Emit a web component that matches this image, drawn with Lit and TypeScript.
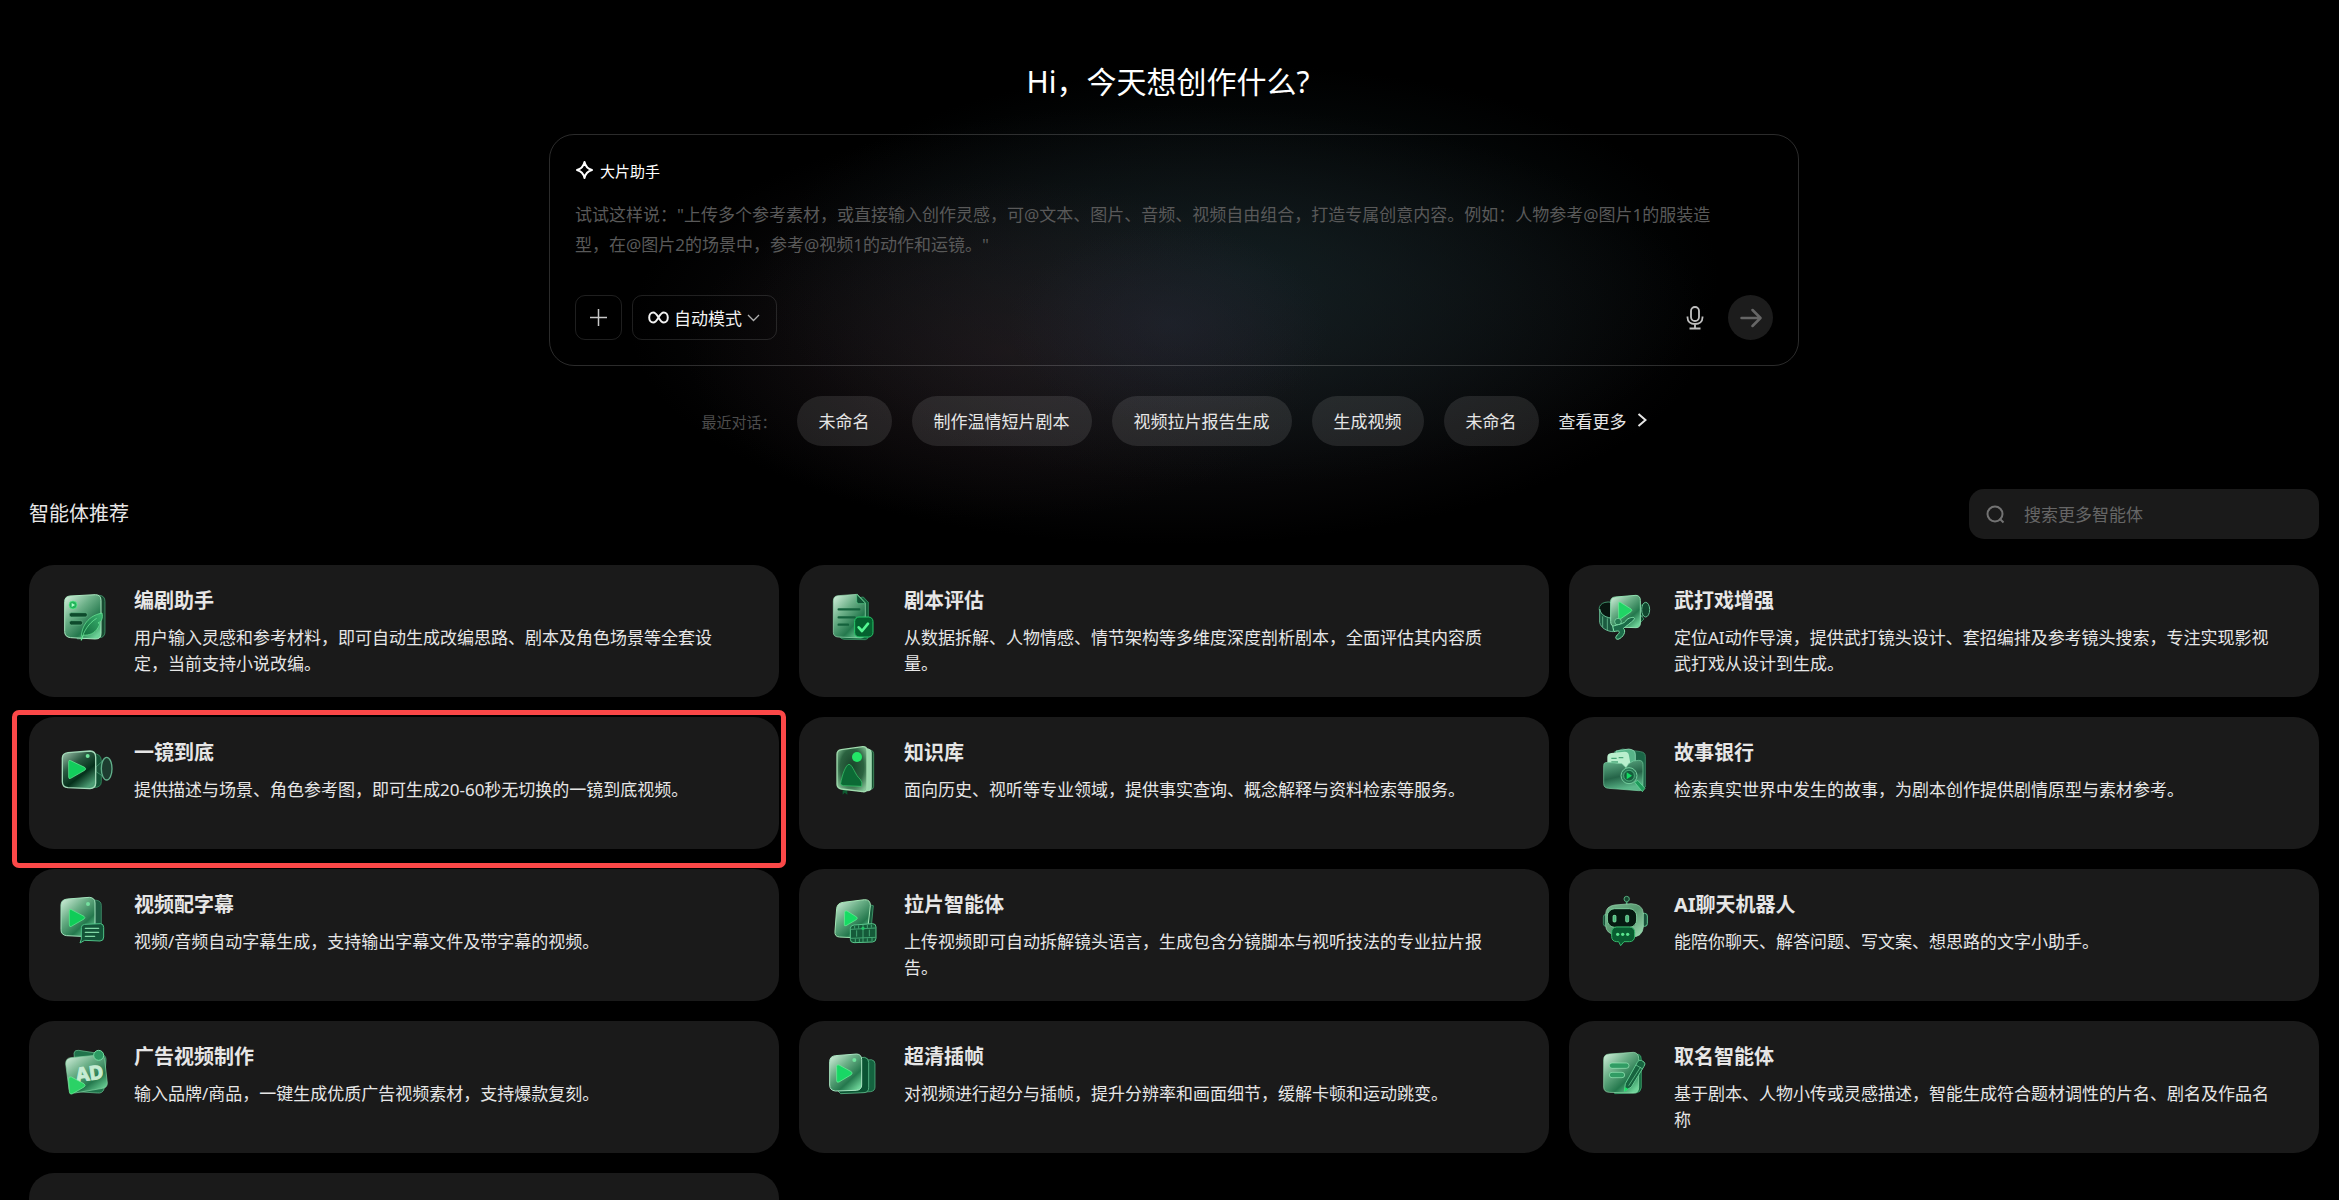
import { LitElement, html, svg, css, nothing } from "lit";
import type { SVGTemplateResult } from "lit";
import { customElement, property } from "lit/decorators.js";

interface Agent {
  icon: string;
  name: string;
  text: string;
  marked?: boolean;
}

const AGENTS: Agent[] = [
  { icon: "script", name: "编剧助手", text: "用户输入灵感和参考材料，即可自动生成改编思路、剧本及角色场景等全套设定，当前支持小说改编。" },
  { icon: "review", name: "剧本评估", text: "从数据拆解、人物情感、情节架构等多维度深度剖析剧本，全面评估其内容质量。" },
  { icon: "action", name: "武打戏增强", text: "定位AI动作导演，提供武打镜头设计、套招编排及参考镜头搜索，专注实现影视武打戏从设计到生成。" },
  { icon: "camera", name: "一镜到底", text: "提供描述与场景、角色参考图，即可生成20-60秒无切换的一镜到底视频。", marked: true },
  { icon: "book", name: "知识库", text: "面向历史、视听等专业领域，提供事实查询、概念解释与资料检索等服务。" },
  { icon: "folder", name: "故事银行", text: "检索真实世界中发生的故事，为剧本创作提供剧情原型与素材参考。" },
  { icon: "subtitle", name: "视频配字幕", text: "视频/音频自动字幕生成，支持输出字幕文件及带字幕的视频。" },
  { icon: "breakdown", name: "拉片智能体", text: "上传视频即可自动拆解镜头语言，生成包含分镜脚本与视听技法的专业拉片报告。" },
  { icon: "robot", name: "AI聊天机器人", text: "能陪你聊天、解答问题、写文案、想思路的文字小助手。" },
  { icon: "ad", name: "广告视频制作", text: "输入品牌/商品，一键生成优质广告视频素材，支持爆款复刻。" },
  { icon: "frames", name: "超清插帧", text: "对视频进行超分与插帧，提升分辨率和画面细节，缓解卡顿和运动跳变。" },
  { icon: "naming", name: "取名智能体", text: "基于剧本、人物小传或灵感描述，智能生成符合题材调性的片名、剧名及作品名称" },
];

const RECENT = ["未命名", "制作温情短片剧本", "视频拉片报告生成", "生成视频", "未命名"];

const GLYPHS: Record<string, SVGTemplateResult> = {
  script: svg`
    <path d="M60 32 L136 25 Q153 26 153 44 V134 Q153 150 138 152 L70 156Z" fill="#174a31" stroke="#4fae7c" stroke-width="2"/>
    <path d="M48 27 L124 23 Q141 23 141 40 V140 Q141 156 124 156 L50 152 Q32 150 32 134 V44 Q32 28 48 27Z" fill="url(#glass)" stroke="#a9e8bf" stroke-width="3"/>
    <circle cx="57" cy="54" r="12" fill="#23b45b" stroke="#5df08c" stroke-width="2"/>
    <path d="M53 48 L63 54 L53 60Z" fill="#b5ffcc"/>
    <rect x="46" y="77" width="54" height="13" rx="6" fill="#0e4a2c" stroke="#62b585" stroke-width="2"/>
    <rect x="46" y="101" width="40" height="13" rx="6" fill="#0e4a2c" stroke="#62b585" stroke-width="2"/>
    <path d="M82 160 C80 128 94 88 144 78 C148 94 142 104 132 108 C138 108 138 112 132 122 C122 140 104 146 88 144Z" fill="url(#deep)" stroke="#6ff09c" stroke-width="2"/>
    <path d="M82 160 C88 134 104 108 128 94" fill="none" stroke="#7af7a6" stroke-width="2"/>`,
  review: svg`
    <path d="M46 40 L118 30 L133 46 V150 Q133 156 124 158 L60 157 Q46 154 46 144Z" fill="#14603b" stroke="#3fa871" stroke-width="2"/>
    <path d="M42 26 L100 22 L124 48 V138 Q124 152 110 153 L42 150 Q28 149 28 136 V42 Q28 27 42 26Z" fill="url(#glass)" stroke="#9fe5ba" stroke-width="2"/>
    <path d="M98 22 L125 50 H104 Q98 50 98 43Z" fill="#0f5434" stroke="#5ccf8c" stroke-width="2"/>
    <path d="M44 67 H106 M44 91 H92 M44 113 H72" stroke="#14623c" stroke-width="7" stroke-linecap="round"/>
    <rect x="92" y="90" width="55" height="60" rx="13" fill="#04622f" stroke="#28c76a" stroke-width="3"/>
    <path d="M104 121 L114 132 L132 110" fill="none" stroke="#55f793" stroke-width="8" stroke-linecap="round" stroke-linejoin="round"/>`,
  action: svg`
    <path d="M134 60 L146 52 V90 L134 82Z M140 84 V106 L150 96Z" fill="#0d4229" stroke="#4aa878" stroke-width="2"/>
    <ellipse cx="155" cy="68" rx="12" ry="22" fill="#10472e" stroke="#67bf92" stroke-width="3"/>
    <path d="M54 46 C20 40 8 62 20 78 C28 88 44 94 60 94" fill="#07150f" stroke="#3d8f68" stroke-width="3"/>
    <path d="M17 66 V106 C20 124 42 134 58 134 V94 C38 94 20 84 17 66Z" fill="#1b5a40" stroke="#65b58f" stroke-width="3"/>
    <path d="M26 88 V120 M40 94 V130" stroke="#7cd3a5" stroke-width="2"/>
    <path d="M64 30 L126 25 Q139 26 139 40 V108 Q139 122 126 122 L64 120 Q50 118 50 104 V44 Q50 31 64 30Z" fill="url(#glass)" stroke="#8fe0b0" stroke-width="3"/>
    <path d="M74 48 Q74 44 79 46 L111 66 Q116 70 111 74 L79 96 Q74 98 74 94Z" fill="#20d465" stroke="#6cf79c" stroke-width="2"/>
    <circle cx="72" cy="104" r="10" fill="#267a52" stroke="#8fecb5" stroke-width="2"/>
    <path d="M56 118 C70 112 92 112 98 98 C112 88 126 90 120 98 C110 108 96 118 88 124 C98 132 88 152 72 157 C60 156 66 146 74 140 C80 132 72 130 60 134Z" fill="#1c6c49" stroke="#80e2aa" stroke-width="3" stroke-linejoin="round"/>`,
  camera: svg`
    <path d="M118 44 Q142 44 142 66 V128 Q142 146 118 146Z" fill="#125235" stroke="#3f9e6e" stroke-width="2"/>
    <path d="M126 84 L150 62 V114 L126 98Z" fill="#19553a" stroke="#4ea67b" stroke-width="2"/>
    <ellipse cx="158" cy="89" rx="16" ry="34" fill="#1d3d30" stroke="#62b08b" stroke-width="4"/>
    <path d="M42 41 L108 36 Q125 37 125 54 V132 Q125 148 108 149 L42 146 Q25 144 25 128 V58 Q25 43 42 41Z" fill="url(#shade)" stroke="#a2d9b8" stroke-width="4"/>
    <path d="M44 68 Q44 62 50 65 L92 85 Q98 90 92 94 L50 118 Q44 121 44 114Z" fill="#12cd5c" stroke="#6df49b" stroke-width="2"/>
    <circle cx="101" cy="51" r="6" fill="#6ee49b"/>`,
  book: svg`
    <path d="M56 154 V167 L62 161 L70 167 V152Z" fill="#0e5a30"/>
    <path d="M120 28 L142 34 Q149 36 149 44 V142 Q149 150 140 152 L118 154Z" fill="#144f2e" stroke="#51a873" stroke-width="2"/>
    <path d="M112 26 L134 30 Q142 32 142 40 V146 Q142 154 134 155 L112 158Z" fill="#9bd8ad" stroke="#c0f2cd" stroke-width="2"/>
    <path d="M52 32 L116 23 Q129 22 129 36 V146 Q129 160 116 158 L52 150 Q39 148 39 136 V46 Q39 34 52 32Z" fill="url(#cover)" stroke="#a0dcae" stroke-width="4"/>
    <circle cx="99" cy="54" r="15" fill="#23e667"/>
    <path d="M50 134 C54 108 66 76 75 76 C86 76 94 110 108 120 Q116 128 113 142 L58 140 Q50 139 50 134Z" fill="#0c6a35" stroke="#3bd070" stroke-width="2"/>`,
  folder: svg`
    <path d="M62 38 L86 30 L140 38 Q154 40 154 52 V144 L134 150 L62 120Z" fill="#1b6546" stroke="#4ba57c" stroke-width="2"/>
    <path d="M66 36 L104 30 Q124 32 124 46 V96 H66Z" fill="#57b488" stroke="#a5ecc7" stroke-width="2"/>
    <path d="M52 42 L92 38 Q104 38 105 50 L112 90 L98 98 H40 V54 Q40 44 52 42Z" fill="#b9efcd"/>
    <path d="M52 58 H68 M74 56 H88 M52 69 H72" stroke="#49a678" stroke-width="4"/>
    <path d="M40 70 L84 74 L96 86 L104 74 L118 66 L134 64 Q147 64 147 76 V144 Q147 156 134 155 L44 148 Q29 147 29 134 V80 Q29 69 40 70Z" fill="url(#pocket)" stroke="#79d0a2" stroke-width="2"/>
    <path d="M122 130 L131 124 L153 148 L145 158Z" fill="#1f9a5b" stroke="#6fe2a2" stroke-width="2"/>
    <circle cx="105" cy="110" r="24" fill="#2d7a57" stroke="#74cf9e" stroke-width="3"/>
    <circle cx="105" cy="110" r="16" fill="#145e3c" stroke="#63c592" stroke-width="2"/>
    <path d="M98 100 L114 110 L98 121Z" fill="#12db61"/>`,
  subtitle: svg`
    <path d="M112 26 L128 28 Q142 30 142 44 V124 L112 138Z" fill="#1c5d42" stroke="#4ba37a" stroke-width="2"/>
    <path d="M40 24 L106 19 Q123 20 123 36 V138 L38 134 Q21 132 21 116 V42 Q21 26 40 24Z" fill="url(#glass)" stroke="#a3e4bd" stroke-width="3"/>
    <path d="M46 60 Q46 53 52 56 L90 76 Q95 80 90 84 L52 106 Q46 109 46 102Z" fill="#10cc58" stroke="#64f094" stroke-width="2"/>
    <circle cx="102" cy="39" r="6" fill="#74df9f"/>
    <path d="M92 100 L140 98 Q149 99 149 109 V138 Q149 150 138 150 L92 148 L78 156 L82 144 V110 Q82 101 92 100Z" fill="#135438" stroke="#4ec287" stroke-width="3"/>
    <path d="M94 112 H134 M94 124 H134 M94 136 H122" stroke="#80d8a5" stroke-width="4" stroke-linecap="round"/>`,
  breakdown: svg`
    <path d="M130 34 L140 42 L148 44 L140 128 L122 136Z" fill="#175a3b" stroke="#4fb582" stroke-width="2"/>
    <path d="M58 34 L122 26 Q140 26 139 44 L130 124 Q128 141 112 141 L46 138 Q31 137 33 120 L38 52 Q40 36 58 34Z" fill="url(#glass)" stroke="#a3e6b5" stroke-width="3"/>
    <path d="M62 64 Q63 57 69 60 L98 78 Q102 82 97 86 L66 104 Q60 106 61 100Z" fill="#17db64" stroke="#66f596" stroke-width="2"/>
    <path d="M90 102 L146 98 Q156 98 156 108 V142 Q156 152 146 153 L90 155 Q79 155 79 145 V112 Q79 103 90 102Z" fill="#155a39" stroke="#58c68b" stroke-width="3"/>
    <path d="M80 115 L155 111 M80 142 L155 139 M117 102 V153 M98 118 V137 M136 116 V136 M92 105 V113 M142 101 V110 M104 103 V113 M130 102 V111 M94 143 V153 M106 143 V153 M130 142 V152 M144 141 V151" stroke="#43a673" stroke-width="3"/>
    <circle cx="117" cy="112" r="5" fill="#22c667"/>`,
  robot: svg`
    <path d="M98 32 V46" stroke="#4aa878" stroke-width="5"/>
    <circle cx="98" cy="24" r="8" fill="#17442f" stroke="#55ad7e" stroke-width="3"/>
    <rect x="28" y="70" width="16" height="36" rx="8" fill="#175139" stroke="#4da479" stroke-width="2"/>
    <rect x="143" y="67" width="17" height="39" rx="8" fill="#175139" stroke="#64c694" stroke-width="3"/>
    <path d="M62 42 L112 38 Q146 40 148 66 V108 Q146 138 112 138 L66 132 Q36 128 35 104 V68 Q36 46 62 42Z" fill="url(#skull)" stroke="#9be0b4" stroke-width="2"/>
    <rect x="40" y="53" width="88" height="56" rx="22" fill="#061a11" stroke="#7ecf9d" stroke-width="3"/>
    <rect x="57" y="73" width="9" height="20" rx="3" fill="#49b77a" stroke="#96f1b9" stroke-width="2"/>
    <rect x="95" y="73" width="9" height="20" rx="3" fill="#49b77a" stroke="#96f1b9" stroke-width="2"/>
    <path d="M68 108 H106 Q122 109 122 124 V136 Q121 152 106 152 H90 L80 164 L74 152 H68 Q53 151 53 136 V124 Q53 109 68 108Z" fill="#085c30" stroke="#36b76c" stroke-width="3"/>
    <circle cx="71" cy="130" r="5" fill="#59e38d"/><circle cx="86" cy="130" r="5" fill="#59e38d"/><circle cx="101" cy="130" r="5" fill="#59e38d"/>`,
  ad: svg`
    <path d="M60 30 Q62 20 74 22 L140 32 Q156 36 156 50 L150 138 Q146 152 130 150 L68 146Z" fill="#20734b" stroke="#6fc897" stroke-width="2"/>
    <path d="M50 44 L136 36 Q150 36 152 50 L160 120 Q160 134 146 136 L62 150 Q47 150 45 138 L35 62 Q35 46 50 44Z" fill="url(#glass)" stroke="#84d4a3" stroke-width="2"/>
    <text x="107" y="112" transform="rotate(-8 105 96)" text-anchor="middle" class="badge-text" fill="#c6ecd3">AD</text>
    <circle cx="134" cy="37" r="15" fill="#2c9a62" stroke="#74dca1" stroke-width="3"/>
    <path d="M44 108 Q44 99 52 102 L90 122 Q97 127 90 132 L54 153 Q47 155 46 147Z" fill="#2bd266" stroke="#77f29f" stroke-width="2"/>`,
  frames: svg`
    <path d="M120 52 L142 50 Q153 52 153 62 V132 Q153 144 140 146 L112 148Z" fill="#14633f" stroke="#5fc190" stroke-width="2"/>
    <path d="M104 44 L122 43 Q134 45 134 58 V134 Q134 148 120 149 L50 152 L38 140Z" fill="#0b5433" stroke="#73d6a2" stroke-width="2"/>
    <path d="M34 38 L98 33 Q113 34 113 50 V126 Q113 140 98 142 L34 144 Q17 142 17 126 V56 Q17 40 34 38Z" fill="url(#glass)" stroke="#a9e6c2" stroke-width="3"/>
    <path d="M38 70 Q38 63 45 66 L82 86 Q87 90 82 95 L45 117 Q38 120 38 113Z" fill="#18d765" stroke="#6ff49c" stroke-width="2"/>
    <circle cx="91" cy="51" r="6" fill="#70e39d"/>`,
  naming: svg`
    <path d="M62 40 L134 34 Q142 36 142 50 V134 Q140 148 126 150 L62 152Z" fill="#136b3e" stroke="#49b67b" stroke-width="2"/>
    <path d="M46 33 L118 28 Q134 29 134 46 V134 Q134 150 118 150 L46 148 Q29 147 29 132 V50 Q29 34 46 33Z" fill="url(#glass)" stroke="#98e3b3" stroke-width="2"/>
    <rect x="46" y="60" width="59" height="16" rx="8" fill="#319c64" stroke="#9cebb9" stroke-width="2"/>
    <rect x="46" y="88" width="46" height="16" rx="8" fill="#319c64" stroke="#9cebb9" stroke-width="2"/>
    <path d="M91 145 L94 122 L130 58 Q134 49 142 52 L150 57 Q156 62 150 70 L112 132Z" fill="#17643f" stroke="#63c991" stroke-width="3" stroke-linejoin="round"/>
    <path d="M126 66 L146 78 M104 128 L140 72" stroke="#72d99f" stroke-width="2"/>
    <path d="M91 146 L93 132 L103 138Z" fill="#17e365"/>`,
};

@customElement("agent-icon")
export class AgentIcon extends LitElement {
  @property() name = "";

  static styles = css`
    :host { display: block; width: 60px; height: 60px; flex: none; }
    svg { display: block; width: 100%; height: 100%; overflow: visible; }
    .badge-text { font: 700 58px "Open Sans", "Noto Sans", sans-serif; stroke: #c6ecd3; stroke-width: 3px; }
  `;

  render() {
    return html`<svg viewBox="0 0 180 180" aria-hidden="true">
      <defs>
        <linearGradient id="glass" x1="0" y1="0" x2="0.8" y2="1">
          <stop offset="0" stop-color="#d8f3e0"/><stop offset="0.4" stop-color="#6cb088"/>
          <stop offset="0.74" stop-color="#24784d"/><stop offset="1" stop-color="#6dd398"/>
        </linearGradient>
        <linearGradient id="shade" x1="0" y1="0" x2="0.7" y2="1">
          <stop offset="0" stop-color="#a5c9b3"/><stop offset="0.4" stop-color="#2b5a42"/>
          <stop offset="0.7" stop-color="#05301b"/><stop offset="1" stop-color="#4c9d74"/>
        </linearGradient>
        <radialGradient id="cover" cx="0.5" cy="0.45" r="0.65">
          <stop offset="0" stop-color="#19442a"/><stop offset="0.6" stop-color="#2b6340"/>
          <stop offset="1" stop-color="#86c498"/>
        </radialGradient>
        <linearGradient id="deep" x1="1" y1="0" x2="0" y2="1">
          <stop offset="0" stop-color="#3eb773"/><stop offset="1" stop-color="#0b6034"/>
        </linearGradient>
        <linearGradient id="pocket" x1="0" y1="0" x2="0.3" y2="1">
          <stop offset="0" stop-color="#66b68d"/><stop offset="0.6" stop-color="#256448"/>
          <stop offset="1" stop-color="#5bb88a"/>
        </linearGradient>
        <linearGradient id="skull" x1="0" y1="0" x2="1" y2="1">
          <stop offset="0" stop-color="#78b890"/><stop offset="0.5" stop-color="#57986f"/>
          <stop offset="1" stop-color="#9fe0b5"/>
        </linearGradient>
      </defs>
      ${GLYPHS[this.name] ?? nothing}
    </svg>`;
  }
}

@customElement("agent-card")
export class AgentCard extends LitElement {
  @property({ attribute: false }) agent?: Agent;

  static styles = css`
    :host { display: block; position: relative; }
    .card {
      box-sizing: border-box; display: flex; gap: 20px; min-height: 132px; height: 100%;
      padding: 22px 40px 20px 25px; border-radius: 25px; background: #1a1a1a;
      color: #e6e6e6; text-decoration: none;
    }
    .copy { flex: 1; min-width: 0; }
    .name { margin: 0 0 10px; font-size: 20px; line-height: 28px; font-weight: 700; }
    .text { margin: 0; font-size: 17px; line-height: 26px; }
    .marker {
      position: absolute; inset: -7px -7px -19px -17px; border: 5px solid #fb4848;
      border-radius: 7px; pointer-events: none;
    }
  `;

  render() {
    const a = this.agent;
    return html`
      <a class="card" href="#">
        ${a
          ? html`<agent-icon name=${a.icon}></agent-icon>
              <div class="copy">
                <h3 class="name">${a.name}</h3>
                <p class="text">${a.text}</p>
              </div>`
          : nothing}
      </a>
      ${a?.marked ? html`<span class="marker"></span>` : nothing}
    `;
  }
}

@customElement("app-root")
export class AppRoot extends LitElement {
  static styles = css`
    :host {
      display: block; height: 100vh; overflow: hidden; background: #000; color: #e6e6e6;
      font-family: "Noto Sans", "Noto Sans CJK SC", sans-serif; font-size: 17px;
    }
    button, input, textarea { font: inherit; color: inherit; margin: 0; border: 0; background: none; outline: none; }
    button { cursor: pointer; }
    svg { display: block; flex: none; fill: none; stroke: currentColor; }
    .page {
      box-sizing: border-box; min-height: 100%; padding: 62px 20px 20px 29px;
      background:
        radial-gradient(ellipse 160px 100px at 50% 325px, rgba(38, 40, 58, 0.35), transparent),
        radial-gradient(ellipse 320px 170px at 43% 350px, rgba(44, 28, 32, 0.4), transparent),
        radial-gradient(ellipse 480px 210px at 53% 275px, rgba(18, 34, 37, 0.7), transparent),
        radial-gradient(ellipse 540px 220px at 50% 325px, rgba(32, 31, 36, 0.75), transparent);
    }
    .title {
      margin: 0 0 32px; padding-right: 12px; text-align: center;
      font-size: 30px; line-height: 40px; font-weight: 400; color: #fff;
    }
    .composer {
      box-sizing: border-box; max-width: 1250px; margin: 0 auto; padding: 25px;
      border: 1px solid rgba(255, 255, 255, 0.17); border-radius: 25px;
    }
    .assistant { display: flex; align-items: center; gap: 6px; height: 20px; color: #fff; font-size: 15px; }
    .prompt {
      display: block; box-sizing: border-box; width: 100%; height: 60px; margin: 20px 0 35px;
      padding: 0 32px 0 0; resize: none; overflow: hidden; line-height: 30px;
    }
    .prompt::placeholder { color: #595959; opacity: 1; }
    .tools { display: flex; align-items: center; gap: 10px; height: 45px; }
    .tool {
      box-sizing: border-box; display: flex; align-items: center; justify-content: center; gap: 5px;
      height: 45px; min-width: 47px; border: 1px solid rgba(255, 255, 255, 0.12); border-radius: 10px; padding: 0 14px;
      color: #c8c8c8;
    }
    .mode { padding: 0 16px 0 15px; color: #f2f2f2; }
    .caret { color: #b0b0b0; }
    .mic { display: flex; margin-left: auto; padding: 0; margin-right: 14px; color: #c0c0c0; }
    .send {
      display: flex; align-items: center; justify-content: center; width: 45px; height: 45px;
      padding: 0; border-radius: 50%; background: #1c1c1c; color: #666;
    }
    .recent { display: flex; align-items: center; justify-content: center; gap: 20px; margin-top: 30px; }
    .recent-label { font-size: 15px; color: #4d4d4d; }
    .chip { height: 50px; padding: 0 22px 2px; border-radius: 25px; background: rgba(255, 255, 255, 0.1); color: #e6e6e6; }
    .more { display: flex; align-items: center; gap: 10px; padding-bottom: 2px; color: #e6e6e6; text-decoration: none; }
    .section-head { display: flex; align-items: center; justify-content: space-between; margin: 43px 0 26px; }
    .section-title { margin: 0; font-size: 20px; line-height: 30px; font-weight: 400; }
    .search {
      box-sizing: border-box; display: flex; align-items: center; gap: 19px; width: 350px; height: 50px;
      padding: 0 17px; border-radius: 15px; background: #1a1a1a; color: #737373;
    }
    .search-input { flex: 1; min-width: 0; padding: 0; }
    .search-input::placeholder { color: #666; opacity: 1; }
    .grid { display: grid; grid-template-columns: repeat(3, minmax(0, 1fr)); gap: 20px; margin: 0; padding: 0; list-style: none; }
  `;

  render() {
    return html`
      <main class="page">
        <h1 class="title">Hi，今天想创作什么?</h1>
        <form class="composer" @submit=${(e: Event) => e.preventDefault()}>
          <div class="assistant">
            <svg width="19" height="20" viewBox="0 0 19 20" stroke-width="2" stroke-linejoin="round" aria-hidden="true">
              <path d="M9.500 2 C10.500 6.500 13 9 17 10 C13 11 10.500 13.500 9.500 18 C8.500 13.500 6 11 2 10 C6 9 8.500 6.500 9.500 2Z"/>
            </svg>
            <span>大片助手</span>
          </div>
          <textarea class="prompt" aria-label="创作描述"
            placeholder='试试这样说："上传多个参考素材，或直接输入创作灵感，可@文本、图片、音频、视频自由组合，打造专属创意内容。例如：人物参考@图片1的服装造型，在@图片2的场景中，参考@视频1的动作和运镜。"'></textarea>
          <div class="tools">
            <button class="tool" type="button" aria-label="添加">
              <svg width="17" height="17" viewBox="0 0 17 17" stroke-width="1.500"><path d="M8.500 0V17M0 8.500H17"/></svg>
            </button>
            <button class="tool mode" type="button">
              <svg width="21" height="13" viewBox="0 0 21 13" stroke-width="2">
                <path d="M10.500 6.500 C8.500 3 7 1.500 5.200 1.500 C3 1.500 1.200 3.500 1.200 6.500 S3 11.500 5.200 11.500 C7 11.500 8.500 10 10.500 6.500 S14 1.500 15.800 1.500 C18 1.500 19.800 3.500 19.800 6.500 S18 11.500 15.800 11.500 C14 11.500 12.500 10 10.500 6.500Z"/>
              </svg>
              自动模式
              <svg class="caret" width="13" height="8" viewBox="0 0 13 8" stroke-width="1.300"><path d="M1 1 L6.500 6.500 L12 1"/></svg>
            </button>
            <button class="mic" type="button" aria-label="语音输入">
              <svg width="18" height="24" viewBox="0 0 18 24" stroke-width="1.800">
                <rect x="5" y="1" width="8" height="14" rx="4"/>
                <path d="M1.500 10.500 V11.500 C1.500 15.500 4.500 18 9 18 S16.500 15.500 16.500 11.500 V10.500 M9 18 V22.500 M3.500 22.500 H14.500"/>
              </svg>
            </button>
            <button class="send" type="submit" aria-label="发送">
              <svg width="22" height="20" viewBox="0 0 22 20" stroke-width="2.500" stroke-linecap="round" stroke-linejoin="round">
                <path d="M1.500 10 H20 M12.500 2 L20.500 10 L12.500 18"/>
              </svg>
            </button>
          </div>
        </form>
        <nav class="recent" aria-label="最近对话">
          <span class="recent-label">最近对话：</span>
          ${RECENT.map((name) => html`<button class="chip" type="button">${name}</button>`)}
          <a class="more" href="#">查看更多
            <svg width="10" height="14" viewBox="0 0 10 14" stroke-width="2"><path d="M1.500 1 L8.500 7 L1.500 13"/></svg>
          </a>
        </nav>
        <section>
          <header class="section-head">
            <h2 class="section-title">智能体推荐</h2>
            <label class="search">
              <svg width="19" height="19" viewBox="0 0 19 19" stroke-width="2">
                <circle cx="9" cy="9" r="7.500"/><path d="M13.500 13.500 L17.500 17.500"/>
              </svg>
              <input class="search-input" type="text" aria-label="搜索更多智能体" placeholder="搜索更多智能体" />
            </label>
          </header>
          <ul class="grid">
            ${AGENTS.map((agent) => html`<li><agent-card .agent=${agent}></agent-card></li>`)}
            <li><agent-card></agent-card></li>
          </ul>
        </section>
      </main>
    `;
  }
}
